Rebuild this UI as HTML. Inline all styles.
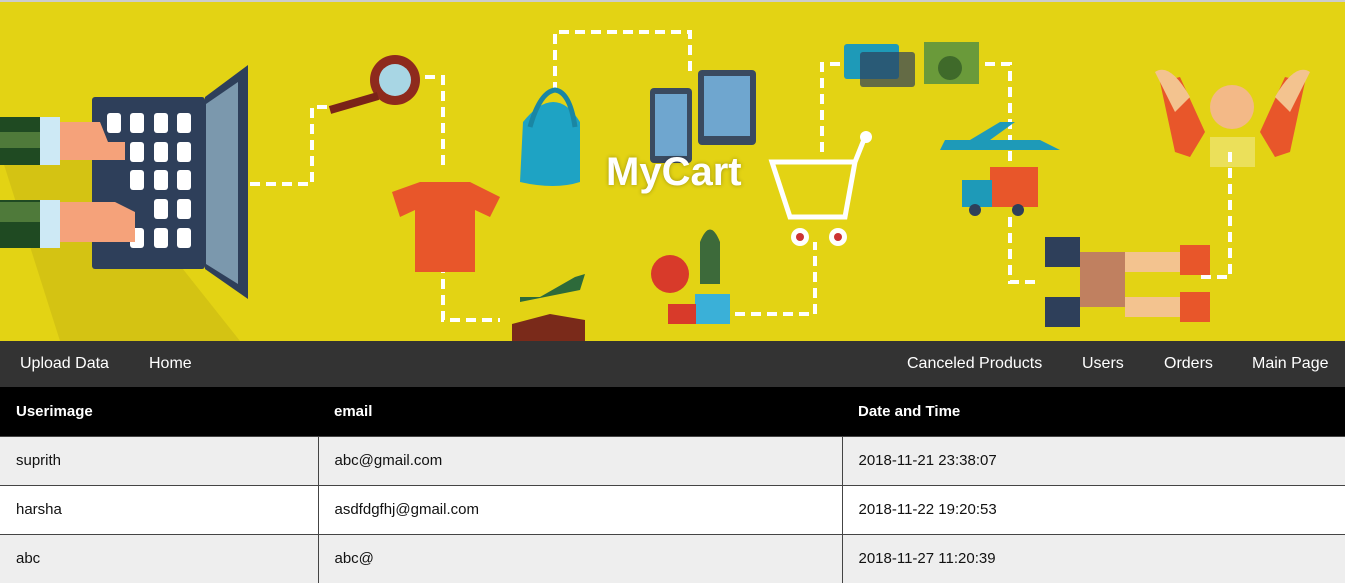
<!DOCTYPE html>
<html><head><style>
*{margin:0;padding:0;box-sizing:border-box}
body{width:1345px;height:581px;overflow:hidden;background:#fff;font-family:"Liberation Sans",Arial,sans-serif}
.top{height:2px;background:#ccc}
.banner{position:relative;height:339px;background:#e3d314;overflow:hidden}
.banner h1{position:absolute;left:606px;top:148px;color:#fff;font-size:40px;font-weight:bold;text-shadow:0 0 4px rgba(0,0,0,.3)}
nav{height:46px;background:#333;position:relative;font-size:16px;color:#fff}
nav span{position:absolute;top:14px}
table{border-collapse:collapse;width:1345px;font-size:15px}
th{background:#000;color:#fff;text-align:left;height:49px;padding-left:16px;font-weight:bold}
td{height:49px;padding-left:16px;color:#111;border-top:1px solid #444}
td+td{border-left:1px solid #444}
tr.g td{background:#eee}
</style></head><body>
<div class="top"></div>
<div class="banner">
<svg width="1345" height="339" style="position:absolute;left:0;top:0">
<g fill="none" stroke="#fff" stroke-width="4" stroke-dasharray="10 6">
<path d="M250 182 H312 V105 H330"/>
<path d="M425 75 H443 V165"/>
<path d="M443 245 V318 H500"/>
<path d="M555 90 V30 H690 V70"/>
<path d="M735 312 H815 V240"/>
<path d="M822 150 V62 H840"/>
<path d="M985 62 H1010 V160"/>
<path d="M1010 215 V280 H1040"/>
<path d="M1230 150 V275 H1200"/>
</g>
<polygon points="0,150 90,150 240,339 60,339" fill="#c9b912" opacity=".6"/>
<rect x="0" y="115" width="42" height="48" fill="#1f4a22"/><rect x="0" y="130" width="42" height="16" fill="#4f7a3a"/>
<rect x="0" y="198" width="42" height="48" fill="#1f4a22"/><rect x="0" y="200" width="42" height="20" fill="#4f7a3a"/>
<rect x="92" y="95" width="113" height="172" rx="3" fill="#2e3f5a"/>
<polygon points="205,95 248,63 248,297 205,267" fill="#2e3f5a"/>
<polygon points="206,102 238,80 238,282 206,262" fill="#7b98ad"/>
<g fill="#fff">
<rect x="107" y="111" width="14" height="20" rx="3"/><rect x="130" y="111" width="14" height="20" rx="3"/><rect x="154" y="111" width="14" height="20" rx="3"/><rect x="177" y="111" width="14" height="20" rx="3"/>
<rect x="130" y="140" width="14" height="20" rx="3"/><rect x="154" y="140" width="14" height="20" rx="3"/><rect x="177" y="140" width="14" height="20" rx="3"/>
<rect x="130" y="168" width="14" height="20" rx="3"/><rect x="154" y="168" width="14" height="20" rx="3"/><rect x="177" y="168" width="14" height="20" rx="3"/>
<rect x="154" y="197" width="14" height="20" rx="3"/><rect x="177" y="197" width="14" height="20" rx="3"/>
<rect x="130" y="226" width="14" height="20" rx="3"/><rect x="154" y="226" width="14" height="20" rx="3"/><rect x="177" y="226" width="14" height="20" rx="3"/>
</g>
<rect x="40" y="115" width="20" height="48" fill="#cde9f5"/><rect x="40" y="198" width="20" height="48" fill="#cde9f5"/>
<path d="M60 120 H100 L108 140 H125 L125 158 H60Z" fill="#f5a27a"/>
<path d="M60 200 H115 L135 210 L135 240 H60Z" fill="#f5a27a"/>
<circle cx="395" cy="78" r="25" fill="#8e2a1d"/><circle cx="395" cy="78" r="16" fill="#a8d6e4"/>
<line x1="378" y1="94" x2="330" y2="108" stroke="#7a2318" stroke-width="8"/>
<path d="M392 190 L420 180 H470 L500 195 L490 215 L475 208 V270 H415 V208 L400 215Z" fill="#e8562a"/>
<path d="M523 120 Q555 80 580 120 V180 Q555 188 520 180Z" fill="#1ea3c4"/>
<path d="M530 125 Q540 90 555 88 Q570 90 575 125" fill="none" stroke="#1a86a3" stroke-width="5"/>
<path d="M520 300 L580 288 L585 272 L575 275 L540 295 H520Z" fill="#2d6a3a"/>
<path d="M512 322 L550 312 L585 318 V339 H512Z" fill="#7a2a1a"/>
<rect x="650" y="86" width="42" height="75" rx="4" fill="#3a4a60"/><rect x="655" y="92" width="32" height="62" fill="#6fa6cf"/>
<rect x="698" y="68" width="58" height="75" rx="4" fill="#3a4a60"/><rect x="704" y="74" width="46" height="60" fill="#6fa6cf"/>
<path d="M772 160 H855 L845 215 H790Z" fill="none" stroke="#fff" stroke-width="5"/>
<path d="M855 160 L865 135" stroke="#fff" stroke-width="5"/><circle cx="866" cy="135" r="6" fill="#fff"/>
<circle cx="800" cy="235" r="9" fill="#fff"/><circle cx="800" cy="235" r="4" fill="#c33"/>
<circle cx="838" cy="235" r="9" fill="#fff"/><circle cx="838" cy="235" r="4" fill="#c33"/>
<circle cx="670" cy="272" r="19" fill="#d83a2a"/>
<path d="M700 282 V240 Q710 215 720 240 V282Z" fill="#3d6a3a"/>
<rect x="695" y="292" width="35" height="30" fill="#3ab0d8"/><rect x="668" y="302" width="28" height="20" fill="#d83a2a"/>
<rect x="844" y="42" width="55" height="35" rx="3" fill="#1e9ab8"/><rect x="860" y="50" width="55" height="35" rx="3" fill="#2e3f5a" opacity=".7"/>
<rect x="924" y="40" width="55" height="42" fill="#6a9a3a"/><circle cx="950" cy="66" r="12" fill="#3f6a2a"/>
<path d="M940 148 H1060 L1040 138 H990 L1015 120 H1000 L970 138 H945Z" fill="#1e9ab8"/>
<rect x="990" y="165" width="48" height="40" fill="#e8562a"/><rect x="962" y="178" width="30" height="27" fill="#1e9ab8"/>
<circle cx="975" cy="208" r="6" fill="#2e3f5a"/><circle cx="1018" cy="208" r="6" fill="#2e3f5a"/>
<circle cx="1232" cy="105" r="22" fill="#f3b987"/>
<path d="M1210 135 H1255 V165 H1210Z" fill="#fff" opacity=".3"/>
<path d="M1160 80 L1180 75 L1205 130 L1190 155 L1175 150Z" fill="#e8562a"/>
<path d="M1305 80 L1285 75 L1260 130 L1275 155 L1290 150Z" fill="#e8562a"/>
<path d="M1155 70 Q1170 60 1190 95 L1175 110Z" fill="#f3c38f"/><path d="M1310 70 Q1295 60 1275 95 L1290 110Z" fill="#f3c38f"/>
<rect x="1080" y="250" width="45" height="55" fill="#c08060"/>
<rect x="1045" y="235" width="35" height="30" fill="#2e3f5a"/><rect x="1045" y="295" width="35" height="30" fill="#2e3f5a"/>
<path d="M1125 250 H1180 V270 H1125Z" fill="#f3c38f"/><path d="M1125 295 H1180 V315 H1125Z" fill="#f3c38f"/>
<rect x="1180" y="243" width="30" height="30" fill="#e8562a"/><rect x="1180" y="290" width="30" height="30" fill="#e8562a"/>
</svg>
<h1>MyCart</h1>
</div>
<nav><span style="left:20px">Upload Data</span><span style="left:149px">Home</span><span style="left:907px">Canceled Products</span><span style="left:1082px">Users</span><span style="left:1164px">Orders</span><span style="left:1252px">Main Page</span></nav>
<table>
<tr><th style="width:318px">Userimage</th><th style="width:524px">email</th><th>Date and Time</th></tr>
<tr class="g"><td>suprith</td><td>abc@gmail.com</td><td>2018-11-21 23:38:07</td></tr>
<tr><td>harsha</td><td>asdfdgfhj@gmail.com</td><td>2018-11-22 19:20:53</td></tr>
<tr class="g"><td>abc</td><td>abc@</td><td>2018-11-27 11:20:39</td></tr>
</table>
</body></html>
